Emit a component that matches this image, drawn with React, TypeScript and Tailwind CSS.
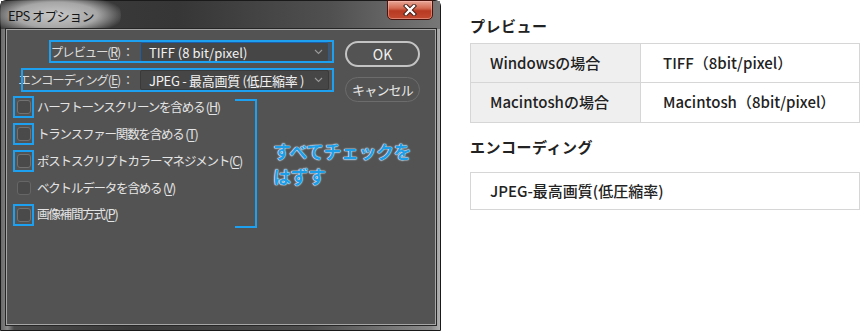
import React from "react";

function Check({ children, hl, dim }: { children: React.ReactNode; hl?: boolean; dim?: boolean }) {
  return (
    <div className="flex h-[26.8px] items-center">
      <div
        className={
          "relative ml-[10px] h-[14px] w-[14px] shrink-0 rounded-[3px] border bg-[#4a4a4a] " +
          (dim ? "border-[#666666]" : "border-[#727272]")
        }
      >
        {hl && <span className="absolute -bottom-[5px] -left-[5px] -right-[4px] -top-[5px] border-2 border-[#1ea0f0]" />}
      </div>
      <span className="ml-[6px] whitespace-nowrap text-[12.5px] leading-none tracking-[-1.2px] text-[#e4e4e4]">
        {children}
      </span>
    </div>
  );
}

function Chevron() {
  return (
    <svg width="9" height="6" viewBox="0 0 9 6" className="shrink-0">
      <polyline points="1,1 4.5,4.5 8,1" fill="none" stroke="#9a9a9a" strokeWidth="1.1" />
    </svg>
  );
}

export default function App() {
  return (
    <div className="flex h-[331px] w-[860px] overflow-hidden bg-white font-['Meiryo_UI','Noto_Sans_CJK_JP','Noto_Sans',sans-serif]">
      {/* Dialog */}
      <div className="relative h-[331px] w-[441px] shrink-0 rounded-t-[6px] border border-[#1a1a1a] bg-[linear-gradient(90deg,#6a6a6a_0%,#8a8a8a_1.5%,#4a4a4a_3%,#3a3a3a_30%,#4d4d4d_70%,#8a8a8a_98%,#b0b0b0_100%)]">
        {/* title bar */}
        <div className="relative flex h-[28px] items-center bg-[linear-gradient(90deg,#3e3e3e_0%,#363636_40%,#505050_75%,#777777_100%)] pl-[7px]">
          <span className="absolute left-[-10px] top-[-6px] h-[40px] w-[130px] rounded-full bg-[radial-gradient(ellipse_at_center,#c8c8c8_0%,#a6a6a6_45%,rgba(90,90,90,0)_75%)]" />
          <span className="relative text-[13px] leading-none tracking-[-0.6px] text-[#151515]">EPS オプション</span>
          {/* close button */}
          <div className="absolute left-[386px] top-[-1px] flex h-[20px] w-[46px] items-center justify-center rounded-b-[5px] border border-[#4a140c] bg-[linear-gradient(180deg,#e9a797_0%,#d36a52_40%,#b83a22_55%,#c24a30_100%)] shadow-[inset_0_0_0_1px_rgba(255,200,190,0.45)]">
            <svg width="14" height="12" viewBox="0 0 14 12">
              <path d="M3 2 L11 10 M11 2 L3 10" stroke="#3a1a14" strokeWidth="4.2" strokeLinecap="square" />
              <path d="M3 2 L11 10 M11 2 L3 10" stroke="#ffffff" strokeWidth="2.4" strokeLinecap="square" />
            </svg>
          </div>
        </div>

        {/* panel */}
        <div className="relative ml-[5px] h-[296px] w-[430px] border border-[#a6a6a6] bg-[#535353] shadow-[0_0_0_1px_#262626]">
          {/* top form + buttons */}
          <div className="flex h-[60px] items-start pt-[11px]">
            <div className="mt-[1px] flex flex-col gap-[8px]">
              <div className="relative flex h-[20px] items-center">
                <span className="absolute -bottom-[1px] -right-[5px] -top-[2px] left-[42px] border-2 border-[#1ea0f0]" />
                <div className="w-[128px] whitespace-nowrap pr-[2px] text-right text-[12.5px] leading-none tracking-[-1.2px] text-[#dcdcdc]">
                  プレビュー(<u className="underline-offset-2">R</u>) ：
                </div>
                <div className="ml-[5px] flex h-[20px] w-[189px] items-center justify-between rounded-[2px] border border-[#1f5ea6] bg-[#464646] pl-[8px] pr-[5px]">
                  <span className="whitespace-nowrap text-[13px] leading-none text-[#f2f2f2]">TIFF (8 bit/pixel)</span>
                  <Chevron />
                </div>
              </div>
              <div className="relative flex h-[20px] items-center">
                <span className="absolute -bottom-[2px] -right-[5px] -top-[2px] left-[14px] border-2 border-[#1ea0f0]" />
                <div className="w-[128px] whitespace-nowrap pr-[2px] text-right text-[12.5px] leading-none tracking-[-1.2px] text-[#dcdcdc]">
                  エンコーディング(<u className="underline-offset-2">E</u>) ：
                </div>
                <div className="ml-[5px] flex h-[20px] w-[189px] items-center justify-between rounded-[2px] border border-[#3a3a3a] bg-[#464646] pl-[8px] pr-[5px]">
                  <span className="whitespace-nowrap text-[13px] leading-none tracking-[-0.3px] text-[#f2f2f2]">JPEG - 最高画質 (低圧縮率 )</span>
                  <Chevron />
                </div>
              </div>
            </div>
            <div className="ml-[16px] flex w-[75px] flex-col gap-[10px]">
              <div className="flex h-[26px] items-center justify-center rounded-full border-2 border-[#c4c4c4] text-[14px] leading-none text-[#f0f0f0]">
                OK
              </div>
              <div className="flex h-[25px] items-center justify-center rounded-full border border-[#6c6c6c] text-[13px] leading-none tracking-[-0.8px] text-[#e8e8e8]">
                キャンセル
              </div>
            </div>
          </div>

          {/* checkboxes */}
          <div className="mt-[4px] flex flex-col">
            <Check hl>
              ハーフトーンスクリーンを含める (<u className="underline-offset-2">H</u>)
            </Check>
            <Check hl>
              トランスファー関数を含める (<u className="underline-offset-2">T</u>)
            </Check>
            <Check hl>
              ポストスクリプトカラーマネジメント(<u className="underline-offset-2">C</u>)
            </Check>
            <Check dim>
              ベクトルデータを含める (<u className="underline-offset-2">V</u>)
            </Check>
            <Check hl>
              画像補間方式(<u className="underline-offset-2">P</u>)
            </Check>
          </div>

          {/* annotation bracket */}
          <div className="absolute left-[228px] top-[69px] h-[129px] w-[22px] border-y-2 border-r-2 border-[#1ea0f0]" />
          <div className="absolute left-[266px] top-[109px] text-[18px] font-bold leading-[25px] tracking-[-0.5px] text-[#1c9ee8] [text-shadow:0_0_1px_#e8f6ff,0_0_1px_#e8f6ff,0_0_2px_#cfeaff]">
            すべてチェックを
            <br />
            はずす
          </div>
        </div>
      </div>

      {/* Right side */}
      <div className="flex flex-col pl-[29px] pt-[15px] font-['Noto_Sans_CJK_JP','Noto_Sans',sans-serif] text-[#222222]">
        <div className="h-[22px] text-[15px] font-bold leading-[22px] tracking-[0.5px]">プレビュー</div>
        <div className="mt-[6px] w-[390px] border border-[#d6d6d6]">
          <div className="flex h-[39px] border-b border-[#d6d6d6]">
            <div className="flex w-[170px] items-center border-r border-[#d6d6d6] bg-[#efefef] pl-[19px] text-[15px] font-medium">
              Windowsの場合
            </div>
            <div className="flex items-center pl-[22px] text-[15px] font-medium">TIFF（8bit/pixel）</div>
          </div>
          <div className="flex h-[39px]">
            <div className="flex w-[170px] items-center border-r border-[#d6d6d6] bg-[#efefef] pl-[19px] text-[15px] font-medium">
              Macintoshの場合
            </div>
            <div className="flex items-center pl-[22px] text-[15px] font-medium">Macintosh（8bit/pixel）</div>
          </div>
        </div>
        <div className="mt-[13px] h-[22px] text-[15px] font-bold leading-[22px] tracking-[0.5px]">エンコーディング</div>
        <div className="mt-[14px] flex h-[38px] w-[390px] items-center border border-[#d6d6d6] pl-[19px] text-[15px] font-medium">
          JPEG-最高画質(低圧縮率)
        </div>
      </div>
    </div>
  );
}
